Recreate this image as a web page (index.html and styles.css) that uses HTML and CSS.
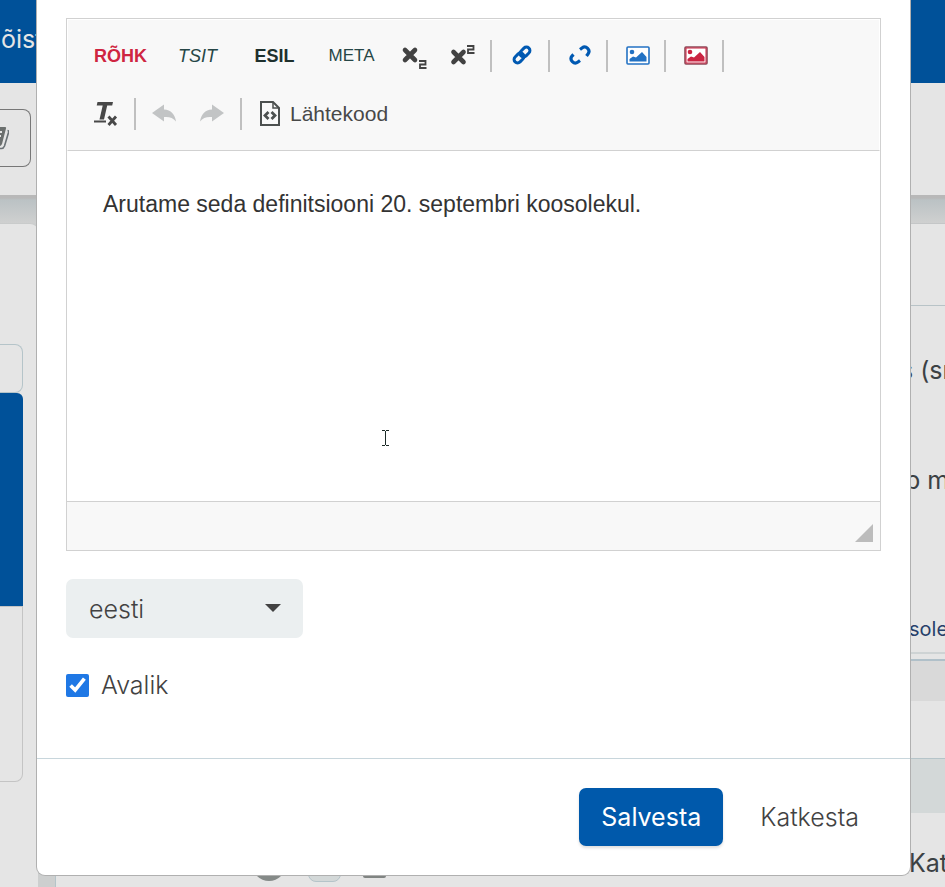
FILE: index.html
```html
<!DOCTYPE html>
<html lang="et">
<head>
<meta charset="utf-8">
<meta name="viewport" content="width=device-width, initial-scale=1">
<title>Märkus</title>
<link rel="stylesheet" href="styles.css">
</head>
<body>
<div class="page">
  <header class="topbar"><span>õist</span></header>
  <div class="toolband">
    <div class="tool-box">
      <svg width="28" height="24" viewBox="0 0 28 24" aria-hidden="true"><path d="M8 1h16q1.500 0 1 1.500L21 18q-1 2-2 2H2z" fill="#6b6f6e"/><path d="M26.500 4.500q1.500 0 1 2L23.500 20q-1 2.500-3 2.500H6" fill="none" stroke="#6b7276" stroke-width="1.600"/><path d="M12 6h9M11 10h9" stroke="#e5e5e5" stroke-width="1.800"/></svg>
    </div>
  </div>
  <div class="gap-band"></div>
  <div class="columns">
    <aside class="side">
      <div class="side-field"></div>
      <div class="side-active"></div>
      <div class="side-list"></div>
    </aside>
    <main class="content">
      <div class="content-head"></div>
      <div class="line line-first"><span>s (sn</span></div>
      <div class="line line-second"><span>b m</span></div>
      <div class="line line-small"><span>sole</span></div>
      <div class="rule-pair"></div>
      <div class="strip-grey"></div>
      <div class="strip-plain"></div>
      <div class="strip-tint"></div>
      <div class="line line-last">
        <div class="marks"><i class="mark-round"></i><i class="mark-pill"></i><i class="mark-box"></i></div>
        <span>Kat</span>
      </div>
    </main>
  </div>
</div>

<div class="overlay">
  <form class="dialog">
    <div class="dialog-body">
      <div class="editor">
        <div class="tools">
          <div class="tools-row">
            <button type="button" class="tool word rohk">RÕHK</button>
            <button type="button" class="tool word tsit">TSIT</button>
            <button type="button" class="tool word esil">ESIL</button>
            <button type="button" class="tool word meta">META</button>
            <button type="button" class="tool" aria-label="Alaindeks"><svg width="26" height="26" viewBox="0 0 26 26"><path d="M4 7l10 10M14 7L4 17" stroke="#424242" stroke-width="4.600" stroke-linecap="round"/><path d="M18 18h6.500v3.500H19V25h6.500" fill="none" stroke="#424242" stroke-width="1.800"/></svg></button>
            <button type="button" class="tool" aria-label="Ülaindeks"><svg width="26" height="26" viewBox="0 0 26 26"><path d="M4.500 9l10 10M14.500 9l-10 10" stroke="#424242" stroke-width="4.600" stroke-linecap="round"/><path d="M18 3h6.500v3.500H19V10h6.500" fill="none" stroke="#424242" stroke-width="1.800"/></svg></button>
            <span class="sep"></span>
            <button type="button" class="tool insert" aria-label="Link"><svg width="24" height="24" viewBox="0 0 24 24"><g fill="none" stroke="#0059b2" stroke-width="3"><rect x="-5.500" y="-3.500" width="11" height="7" rx="3.500" transform="translate(15 8) rotate(-45)"/><rect x="-5.500" y="-3.500" width="11" height="7" rx="3.500" transform="translate(9 14) rotate(-45)"/></g></svg></button>
            <span class="sep"></span>
            <button type="button" class="tool insert" aria-label="Eemalda link"><svg width="24" height="24" viewBox="0 0 24 24"><path d="M12 5.500l2-1.500c4-3 9 2 6 6l-1.500 2M5.500 10.500L4 12c-3 4 2 9 6 6l2-1.500" fill="none" stroke="#0059b2" stroke-width="3.200"/></svg></button>
            <span class="sep"></span>
            <button type="button" class="tool insert picture" aria-label="Pilt"><svg width="24" height="24" viewBox="0 0 24 24"><rect x="1" y="3" width="22" height="17" rx="1" fill="#fff" stroke="currentColor" stroke-width="1.600"/><circle cx="6" cy="8" r="2.300" fill="currentColor"/><path d="M3.500 17.500v-2.500l3.500-2.500 3 1 6-5.500 4.500 5v4.500z" fill="currentColor"/></svg></button>
            <span class="sep"></span>
            <button type="button" class="tool insert picture red" aria-label="Väline pilt"><svg width="24" height="24" viewBox="0 0 24 24"><rect x="1" y="3" width="22" height="17" rx="1" fill="#fff" stroke="#8a4a58" stroke-width="1.600"/><rect x="2" y="4" width="20" height="15" fill="none" stroke="currentColor"/><circle cx="6" cy="8" r="2.300" fill="currentColor"/><path d="M3.500 17.500v-2.500l3.500-2.500 3 1 6-5.500 4.500 5v4.500z" fill="currentColor"/></svg></button>
            <span class="sep"></span>
          </div>
          <div class="tools-row">
            <button type="button" class="tool" aria-label="Eemalda vormindus"><svg width="26" height="26" viewBox="0 0 26 26"><path d="M4.500 1H20l-.8 3.500h-5L11 18.500H6.500l3.200-14h-6z" fill="#484848"/><path d="M1 20.500h12" stroke="#484848" stroke-width="2"/><path d="M15.500 15.500l7.500 8.500M23 15.500L15.500 24" stroke="#484848" stroke-width="2.800"/></svg></button>
            <span class="sep"></span>
            <button type="button" class="tool" disabled aria-label="Võta tagasi"><svg width="26" height="26" viewBox="0 0 26 26"><path d="M1 12l12-8.500v5c7 0 11 5 12 12-3-4-7-5-12-4.500v4.500z" fill="#c2c4c5"/></svg></button>
            <button type="button" class="tool" disabled aria-label="Tee uuesti"><svg width="26" height="26" viewBox="0 0 26 26"><path d="M25 12L13 3.500v5c-7 0-11 5-12 12 3-4 7-5 12-4.500v4.500z" fill="#c2c4c5"/></svg></button>
            <span class="sep"></span>
            <button type="button" class="tool source"><svg width="24" height="26" viewBox="0 0 24 26"><path d="M3 1h12l6 6v17H3z" fill="#f9f9f9" stroke="#4c504f" stroke-width="2"/><path d="M15 1v6h6" fill="none" stroke="#4c504f" stroke-width="1.500"/><path d="M10.500 11L7 14.500l3.500 3.500M13.500 11l3.500 3.500-3.500 3.500" fill="none" stroke="#4c504f" stroke-width="2.800"/></svg>Lähtekood</button>
          </div>
        </div>
        <textarea class="editor-text" aria-label="Märkuse tekst" spellcheck="false">Arutame seda definitsiooni 20. septembri koosolekul.</textarea>
        <div class="editor-foot"><svg width="18" height="18" viewBox="0 0 18 18" aria-hidden="true"><path d="M18 0v18H0z" fill="#bcbcbc"/></svg></div>
        <svg class="pointer" width="8" height="17" viewBox="0 0 8 17" aria-hidden="true"><path d="M0 .5h3m1 0h3M0 15.500h3m1 0h3M3.500 1v14" fill="none" stroke="#1c2b28"/></svg>
      </div>
      <div class="select-wrap">
        <select class="lang" aria-label="Keel"><option>eesti</option></select>
        <svg width="16" height="8" viewBox="0 0 16 8" aria-hidden="true"><path d="M0 0h16L8 8z" fill="#424242"/></svg>
      </div>
      <label class="public"><input type="checkbox" checked>Avalik</label>
    </div>
    <div class="dialog-foot">
      <button type="button" class="btn primary">Salvesta</button>
      <button type="button" class="btn">Katkesta</button>
    </div>
  </form>
</div>
</body>
</html>
```
FILE: styles.css
```css
* { box-sizing: border-box; }

body {
  margin: 0;
  height: 100vh;
  overflow: hidden;
  background: #e5e5e5;
  color: #424242;
  font: 25px/32px Inter, "Liberation Sans", sans-serif;
}

button, select, textarea, input { font: inherit; color: inherit; margin: 0; }
svg { display: block; flex: none; }

/* Page behind the dialog */
.page { height: 100vh; overflow: hidden; display: flex; flex-direction: column; }
.page > * { flex: none; }
.topbar { height: 83px; padding: 23px 1px 0; background: #005199; color: #e5e5e5; }
.toolband { height: 112px; padding-top: 26px; }
.tool-box {
  width: 31px;
  height: 58px;
  border: 1px solid #777;
  border-left: 0;
  border-radius: 0 8px 8px 0;
  display: flex;
  align-items: center;
  justify-content: flex-end;
  padding-right: 21px;
}
.gap-band { height: 28px; background: linear-gradient(#b8b8b8 0, #b8b8b8 3px, #bbc2c4 5px, #cfd0d0 100%); }
.page > .columns {
  flex: 1 0 auto;
  display: grid;
  grid-template-columns: 38px 1fr;
  column-gap: 17px;
  background: #cdcfcf;
}
.side { background: #e5e5e5; border-top: 1px solid #c9cbcb; border-radius: 0 8px 0 0; padding: 120px 15px 0 0; }
.side-field { height: 49px; border: 1px solid #b5c4c9; border-left: 0; border-radius: 0 8px 8px 0; }
.side-active { height: 213px; background: #005199; border-radius: 0 6px 0 0; }
.side-list { height: 176px; border: 1px solid #c4c4c4; border-left: 0; border-radius: 0 0 8px 0; }
.content { min-width: 0; background: #e5e5e5; border-left: 1px solid #b5c4c9; border-top: 1px solid #c4c6c7; }
.content-head { height: 82px; border-bottom: 1px solid #b8c3c7; }
.line { display: flex; justify-content: flex-end; overflow: hidden; white-space: nowrap; color: #3b4144; }
.line span { flex: none; width: 36px; }
.line-first { padding-top: 48px; height: 110px; }
.line-first span { width: 45px; }
.line-second { padding-top: 48px; height: 149px; }
.line-second span { width: 40px; }
.line-small { height: 87px; padding-bottom: 7px; align-items: flex-end; font-size: 20px; color: #27406a; }
.rule-pair { height: 9px; border-top: 2px solid #ced3d4; border-bottom: 2px solid #b0c0c9; }
.strip-grey { height: 40px; background: #d9d9d9; }
.strip-plain { height: 57px; }
.strip-tint { height: 55px; border-top: 1px solid #b5c4c9; background: #d3d8d8; }
.line-last { height: 90px; padding-top: 34px; justify-content: space-between; }
.marks { display: flex; gap: 22px; padding-left: 196px; align-items: flex-start; }
.marks i { display: block; }
.mark-round { width: 34px; height: 34px; border-radius: 50%; background: #858a88; }
.mark-pill { width: 33px; height: 35px; border-radius: 8px; border: 1px solid #b5c4c9; background: #d3d8d8; }
.mark-box { width: 23px; height: 31px; border-radius: 2px; background: #808482; }

/* Dialog */
.overlay { position: absolute; inset: 0; padding: 0 34px 11px 36px; }
.dialog {
  background: #fff;
  border: 1px solid #b0b0b0;
  border-top: 0;
  border-radius: 0 0 9px 9px;
  overflow: hidden;
}
.dialog-body { padding: 18px 29px 57px; }
.editor { position: relative; border: 1px solid #d1d1d1; }
.tools { background: #f8f8f8; border: 1px solid #fff; border-bottom: 1px solid #d1d1d1; padding: 7px 14px; }
.tools-row { display: flex; align-items: center; height: 58px; }
.tool {
  width: 48px;
  height: 48px;
  padding: 0;
  border: 0;
  background: none;
  display: flex;
  align-items: center;
  justify-content: center;
  font: 21px/24px "Liberation Sans", Arial, sans-serif;
}
.tool.word { width: 77px; font-size: 18px; color: #264646; }
.tool.rohk { color: #cf2541; font-weight: 700; }
.tool.tsit { font-style: italic; }
.tool.esil { color: #1e302d; font-weight: 700; }
.tool.meta { font-size: 17px; }
.tool.insert { padding-left: 4px; }
.tool.picture { color: #2372c3; }
.tool.picture.red { color: #cb2442; }
.tool.source { width: auto; padding: 0 12px; gap: 8px; color: #484848; }
.sep { width: 2px; height: 32px; margin: 0 4px; background: #c0c0c0; }
.editor-text {
  display: block;
  width: 100%;
  height: 350px;
  border: 0;
  outline: 0;
  resize: none;
  padding: 36px;
  background: #fff;
  color: #333;
  font: 23px/34px "Liberation Sans", Arial, sans-serif;
}
.editor-foot {
  height: 49px;
  border-top: 1px solid #d1d1d1;
  background: #f8f8f8;
  display: flex;
  justify-content: flex-end;
  align-items: flex-end;
  padding: 8px 7px;
}
.pointer { position: absolute; left: 315px; top: 411px; }
.select-wrap { position: relative; width: 237px; margin-top: 28px; }
.lang {
  appearance: none;
  display: block;
  width: 100%;
  height: 59px;
  padding: 0 23px;
  border: 0;
  border-radius: 7px;
  background: #ebeff0;
  font-weight: 300;
}
.select-wrap svg { position: absolute; right: 22px; top: 25px; }
.public { display: flex; align-items: center; gap: 12px; margin-top: 31px; width: max-content; font-weight: 300; }
.public input { width: 23px; height: 23px; accent-color: #1f78e5; }
.dialog-foot {
  display: flex;
  justify-content: flex-end;
  gap: 15px;
  padding: 29px;
  border-top: 1px solid #c8d6dc;
}
.btn { height: 58px; padding: 0 22px; border: 0; border-radius: 7px; background: none; font-weight: 300; }
.btn.primary { background: #0059ab; color: #fff; font-weight: 400; box-shadow: 0 2px 3px #0002; }
```
